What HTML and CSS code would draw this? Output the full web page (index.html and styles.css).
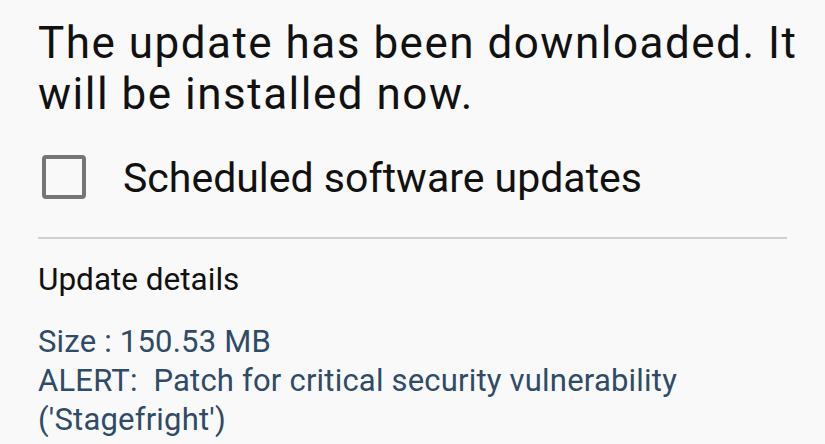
FILE: index.html
```html
<!DOCTYPE html>
<html lang="en">
<head>
<meta charset="utf-8">
<title>Software update</title>
<link rel="stylesheet" href="styles.css">
</head>
<body>
  <main class="screen">
    <p class="status">The update has been downloaded. It will be installed now.</p>

    <label class="option">
      <span class="checkbox" aria-hidden="true"></span>
      <span class="option-label">Scheduled software updates</span>
    </label>

    <hr class="divider">

    <h2 class="details-title">Update details</h2>
    <div class="details-body">
      <p>Size : 150.53 MB</p>
      <p>ALERT:&nbsp; Patch for critical security vulnerability ('Stagefright')</p>
      <p>Once installed, the device will be protected from the exploit</p>
    </div>
  </main>
</body>
</html>
```

FILE: styles.css
```css
html, body {
  margin: 0;
  padding: 0;
  background: #f9f9f9;
  height: 100%;
  overflow: hidden;
}

body {
  font-family: Roboto, "Noto Sans", "Liberation Sans", sans-serif;
  color: #111;
}

.screen {
  padding: 18px 38px 0 38px;
  display: flex;
  flex-direction: column;
}

.status {
  margin: 0 -20px 0 0;
  font-size: 44px;
  line-height: 51px;
  letter-spacing: 1.5px;
  color: #111;
}

.option {
  margin-top: 34px;
  display: flex;
  align-items: center;
}

.checkbox {
  box-sizing: border-box;
  width: 44px;
  height: 44px;
  margin: 0 0 3px 4px;
  border: 4px solid #767676;
  border-radius: 4px;
  flex: none;
}

.option-label {
  margin-left: 37px;
  font-size: 41px;
  line-height: 48px;
  color: #111;
}

.divider {
  margin: 35px 0 0 0;
  border: none;
  height: 2px;
  background: #cfcfcf;
}

.details-title {
  margin: 21px 0 0 0;
  font-size: 31.5px;
  line-height: 40px;
  font-weight: 400;
  color: #111;
}

.details-body {
  margin-top: 22px;
  font-size: 31px;
  line-height: 39px;
  letter-spacing: 0.2px;
  color: #2f4b68;
}

.details-body p {
  margin: 0;
}
```
